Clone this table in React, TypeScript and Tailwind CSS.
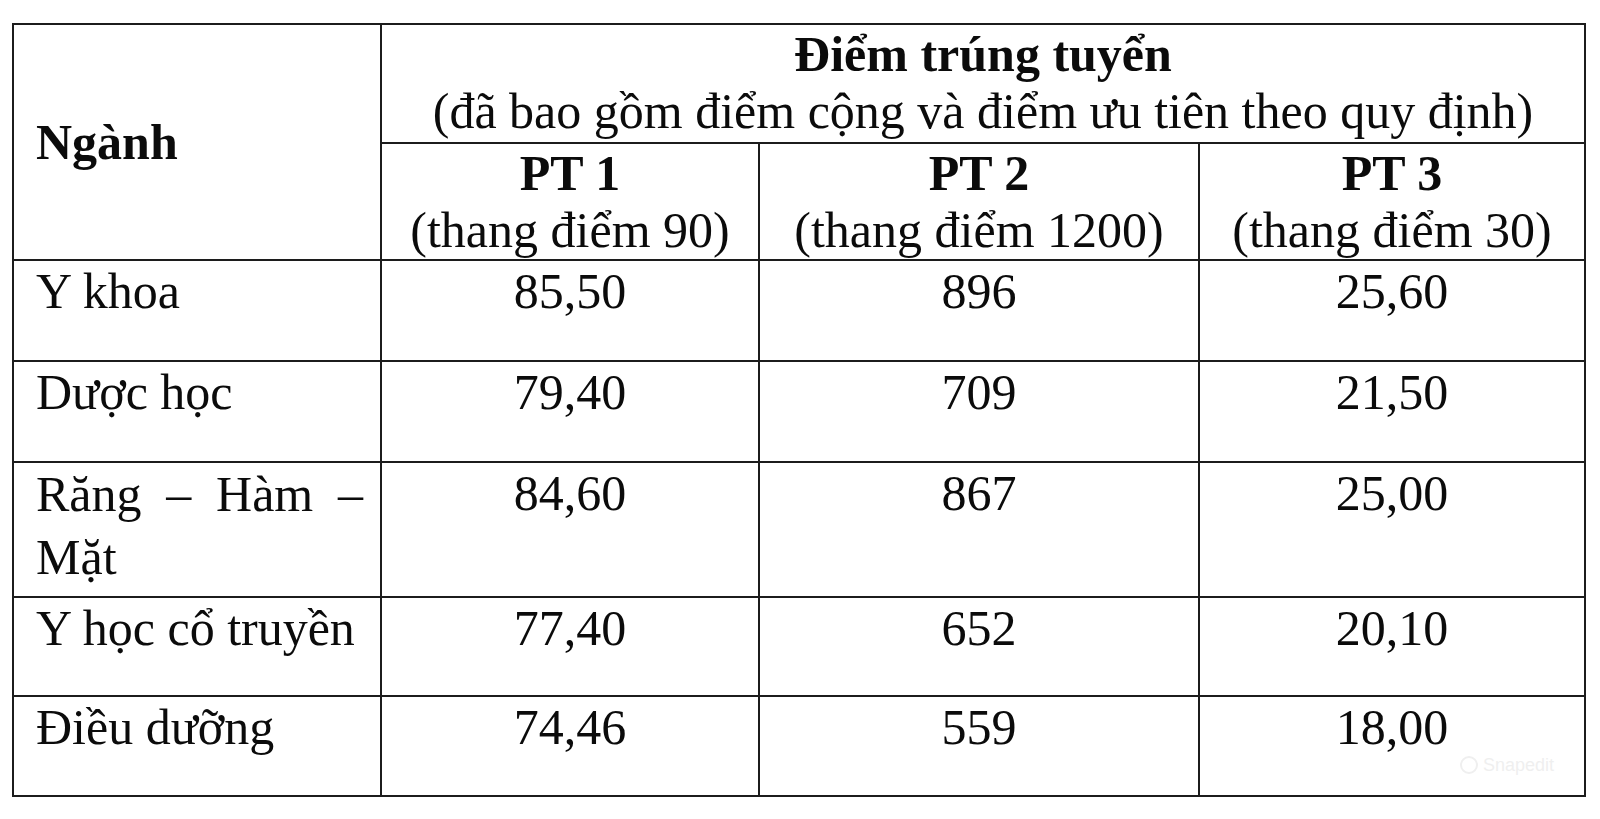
import React from "react";

const serif = { fontFamily: '"Liberation Serif", "Times New Roman", serif' };

const rows: { name: string; v: [string, string, string]; h: string }[] = [
  { name: "Y khoa", v: ["85,50", "896", "25,60"], h: "" },
  { name: "Dược học", v: ["79,40", "709", "21,50"], h: "" },
  { name: "Răng – Hàm – Mặt", v: ["84,60", "867", "25,00"], h: "" },
  { name: "Y học cổ truyền", v: ["77,40", "652", "20,10"], h: "" },
  { name: "Điều dưỡng", v: ["74,46", "559", "18,00"], h: "" },
];

export default function App() {
  return (
    <div className="w-[1600px] h-[819px] bg-white relative overflow-hidden text-[#0b0b0b]" style={serif}>
      <div className="pt-[23px] pl-[12px]">
        <div className="grid grid-cols-[368px_378px_440px_386px] grid-rows-[119px_117px_101px_101px_135px_99px_100px] w-[1574px] border-l-2 border-t-2 border-[#1c1c1c] text-[50px] leading-[57px]">
          <div className="row-span-2 border-r-2 border-b-2 border-[#1c1c1c] flex items-center pl-[22px] font-bold">
            Ngành
          </div>
          <div className="col-span-3 border-r-2 border-b-2 border-[#1c1c1c] text-center pt-[1px]">
            <div className="font-bold">Điểm trúng tuyển</div>
            <div>(đã bao gồm điểm cộng và điểm ưu tiên theo quy định)</div>
          </div>
          {[
            ["PT 1", "(thang điểm 90)"],
            ["PT 2", "(thang điểm 1200)"],
            ["PT 3", "(thang điểm 30)"],
          ].map(([a, b]) => (
            <div key={a} className="border-r-2 border-b-2 border-[#1c1c1c] text-center pt-[1px] whitespace-nowrap">
              <div className="font-bold">{a}</div>
              <div>{b}</div>
            </div>
          ))}
          {rows.map((r, i) => (
            <React.Fragment key={r.name}>
              <div
                className={
                  i === 2
                    ? "border-r-2 border-b-2 border-[#1c1c1c] pl-[22px] pr-[17px] pt-0 leading-[63px] text-justify"
                    : "border-r-2 border-b-2 border-[#1c1c1c] pl-[22px] pr-[12px] pt-[2px] whitespace-nowrap"
                }
              >
                {r.name}
              </div>
              {r.v.map((v, j) => (
                <div key={j} className="border-r-2 border-b-2 border-[#1c1c1c] text-center pt-[2px]">
                  {v}
                </div>
              ))}
            </React.Fragment>
          ))}
        </div>
      </div>
      <div
        className="absolute left-[1460px] top-[756px] flex items-center gap-[5px] text-[#efefef] text-[18px] leading-none"
        style={{ fontFamily: '"Liberation Sans", Arial, sans-serif' }}
      >
        <span className="w-[18px] h-[18px] rounded-full border-2 border-[#efefef]" />
        <span>Snapedit</span>
      </div>
    </div>
  );
}
